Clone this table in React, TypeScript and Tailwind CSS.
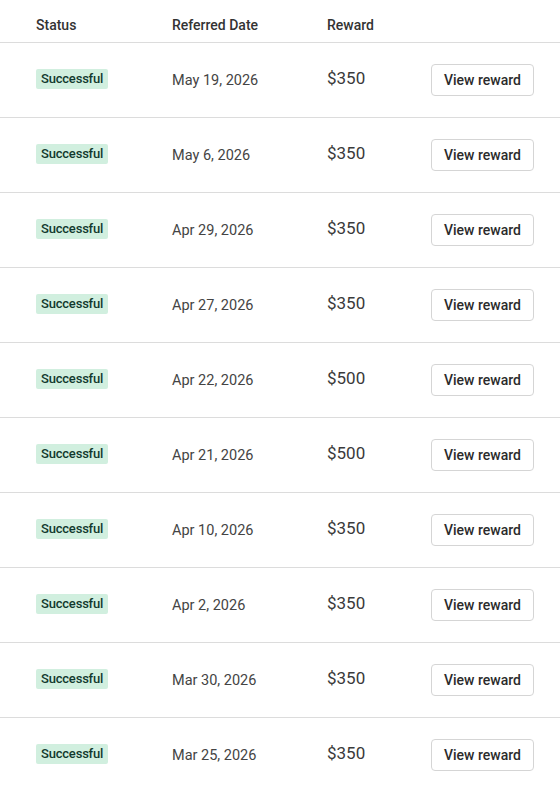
import React from "react";

const rows = [
  ["May 19, 2026", "$350"],
  ["May 6, 2026", "$350"],
  ["Apr 29, 2026", "$350"],
  ["Apr 27, 2026", "$350"],
  ["Apr 22, 2026", "$500"],
  ["Apr 21, 2026", "$500"],
  ["Apr 10, 2026", "$350"],
  ["Apr 2, 2026", "$350"],
  ["Mar 30, 2026", "$350"],
  ["Mar 25, 2026", "$350"],
];

export default function App() {
  return (
    <div className="w-[560px] h-[792px] overflow-hidden bg-white font-['Roboto',sans-serif] text-[#2b2b2b]">
      <div className="grid grid-cols-[136px_155px_104px_1fr] pl-[36px] h-[42px] items-center pt-[8px] text-[14px] font-medium text-[#333]">
        <div>Status</div>
        <div>Referred Date</div>
        <div>Reward</div>
        <div></div>
      </div>
      {rows.map(([date, amt], i) => (
        <div
          key={i}
          className="grid grid-cols-[136px_155px_104px_1fr] pl-[36px] h-[75px] items-center border-t border-[#dcdcdc]"
        >
          <div className="mb-[4px]">
            <span className="inline-flex items-center h-[20px] px-[5px] rounded-[2px] bg-[#d1efdf] text-[#11392e] text-[13px] font-medium tracking-[-0.2px]">
              Successful
            </span>
          </div>
          <div className="text-[14.5px] text-[#444] pt-[1px]">{date}</div>
          <div className="text-[17px] text-[#3a3a3a] mb-[2px]">{amt}</div>
          <div>
            <button className="h-[32px] w-[103px] rounded-[4px] border border-[#d5d5d5] bg-white text-[14px] font-medium text-[#2b2b2b]">
              View reward
            </button>
          </div>
        </div>
      ))}
    </div>
  );
}
